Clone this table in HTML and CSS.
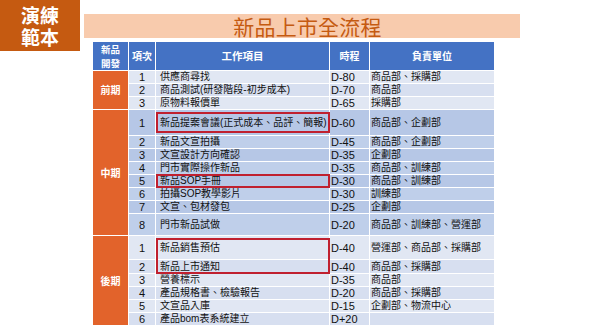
FILE: index.html
```html
<!DOCTYPE html>
<html lang="zh-Hant">
<head>
<meta charset="utf-8">
<title>新品上市全流程</title>
<link rel="stylesheet" href="styles.css">
</head>
<body>
<div class="slide">
  <div class="badge">演練<br>範本</div>
  <div class="main">
    <div class="title">新品上市全流程</div>
    <div class="tbl">
      <div class="h h1"><span>新品</span><span>開發</span></div>
      <div class="h">項次</div>
      <div class="h hw">工作項目</div>
      <div class="h">時程</div>
      <div class="h">負責單位</div>

      <div class="period p1">前期</div>
      <div class="n l1">1</div><div class="w l1">供應商尋找</div><div class="d l1">D-80</div><div class="u l1">商品部、採購部</div>
      <div class="n l2">2</div><div class="w l2">商品測試(研發階段-初步成本)</div><div class="d l2">D-70</div><div class="u l2">商品部</div>
      <div class="n l1">3</div><div class="w l1">原物料報價單</div><div class="d l1">D-65</div><div class="u l1">採購部</div>

      <div class="period p2">中期</div>
      <div class="n k1">1</div><div class="w k1 hl hl1">新品提案會議(正式成本、品評、簡報)</div><div class="d k1">D-60</div><div class="u k1">商品部、企劃部</div>
      <div class="n k2">2</div><div class="w k2">新品文宣拍攝</div><div class="d k2">D-45</div><div class="u k2">商品部、企劃部</div>
      <div class="n k1">3</div><div class="w k1">文宣設計方向確認</div><div class="d k1">D-35</div><div class="u k1">企劃部</div>
      <div class="n k2">4</div><div class="w k2">門市實際操作新品</div><div class="d k2">D-35</div><div class="u k2">商品部、訓練部</div>
      <div class="n k1">5</div><div class="w k1 hl hl2">新品SOP手冊</div><div class="d k1">D-30</div><div class="u k1">商品部、訓練部</div>
      <div class="n k2">6</div><div class="w k2">拍攝SOP教學影片</div><div class="d k2">D-30</div><div class="u k2">訓練部</div>
      <div class="n k1">7</div><div class="w k1">文宣、包材發包</div><div class="d k1">D-25</div><div class="u k1">企劃部</div>
      <div class="n k2">8</div><div class="w k2">門市新品試做</div><div class="d k2">D-20</div><div class="u k2">商品部、訓練部、營運部</div>

      <div class="period p3">後期</div>
      <div class="n l1">1</div><div class="w l1 hl hl3">新品銷售預估</div><div class="d l1">D-40</div><div class="u l1">營運部、商品部、採購部</div>
      <div class="n l2">2</div><div class="w l2">新品上市通知</div><div class="d l2">D-40</div><div class="u l2">商品部、採購部</div>
      <div class="n l1">3</div><div class="w l1">營養標示</div><div class="d l1">D-35</div><div class="u l1">商品部</div>
      <div class="n l2">4</div><div class="w l2">產品規格書、檢驗報告</div><div class="d l2">D-20</div><div class="u l2">商品部、採購部</div>
      <div class="n l1">5</div><div class="w l1">文宣品入庫</div><div class="d l1">D-15</div><div class="u l1">企劃部、物流中心</div>
      <div class="n l2">6</div><div class="w l2">產品bom表系統建立</div><div class="d l2">D+20</div><div class="u l2"></div>
    </div>
  </div>
</div>
</body>
</html>
```
FILE: styles.css
```css
html, body {
  margin: 0;
  padding: 0;
  background: #ffffff;
}
body {
  font-family: "Liberation Sans", "Noto Sans CJK TC", sans-serif;
  color: #111111;
}
.slide {
  width: 600px;
  height: 333px;
  display: flex;
  align-items: flex-start;
  gap: 4px;
  overflow: hidden;
}
.badge {
  width: 80px;
  height: 51px;
  flex: none;
  background: #c55a11;
  color: #ffffff;
  display: flex;
  align-items: center;
  justify-content: center;
  text-align: center;
  font-family: "Noto Sans CJK TC", sans-serif;
  font-weight: 700;
  font-size: 19px;
  line-height: 22px;
}
.main {
  padding-top: 14px;
  display: flex;
  flex-direction: column;
}
.title {
  width: 436px;
  height: 24px;
  box-sizing: border-box;
  padding-left: 11px;
  background: #f8cbad;
  color: #c55a11;
  font-family: "Noto Sans CJK TC", sans-serif;
  font-size: 21px;
  line-height: 24px;
  text-align: center;
  letter-spacing: 0.2px;
}
.tbl {
  margin-top: 4px;
  margin-left: 9px;
  display: grid;
  grid-template-columns: 35px 26px 173px 39px 124px;
  grid-template-rows: 28px 12px 12px 12px 25px repeat(6, 12px) 21px 23px 13px repeat(4, 12px);
  gap: 1px;
  background: #ffffff;
  font-size: 10px;
  line-height: 12px;
}
.h {
  background: #4472c4;
  color: #ffffff;
  font-family: "Noto Sans CJK TC", sans-serif;
  font-weight: 700;
  font-size: 10px;
  display: flex;
  align-items: center;
  justify-content: center;
  text-align: center;
}
.h1 {
  flex-direction: column;
  font-size: 9.5px;
  line-height: 14px;
}
.hw {
  font-size: 10.5px;
}
.period {
  grid-column: 1;
  background: #e2632b;
  color: #ffffff;
  font-family: "Noto Sans CJK TC", sans-serif;
  font-weight: 700;
  font-size: 10px;
  display: flex;
  align-items: center;
  justify-content: center;
}
.p1 { grid-row: 2 / 5; }
.p2 { grid-row: 5 / 13; }
.p3 { grid-row: 13 / 19; }

.n, .w, .d, .u {
  display: flex;
  align-items: center;
  white-space: nowrap;
  position: relative;
}
.n {
  justify-content: center;
  font-size: 11px;
}
.w { padding-left: 4px; }
.d { padding-left: 1px; font-size: 11px; }
.u { padding-left: 1px; }

.l1 { background: #e1e7f3; }
.l2 { background: #d7dff0; }
.k1 { background: #b6c7e6; }
.k2 { background: #bfcfea; }

.hl::after {
  content: "";
  position: absolute;
  left: 0;
  right: -1px;
  border: 2px solid #c0202f;
  box-sizing: border-box;
  z-index: 2;
  pointer-events: none;
}
.hl1::after { top: 2px; bottom: 2px; }
.hl2::after { top: -1px; bottom: -1px; }
.hl3::after { top: 2px; bottom: -15px; }
```
